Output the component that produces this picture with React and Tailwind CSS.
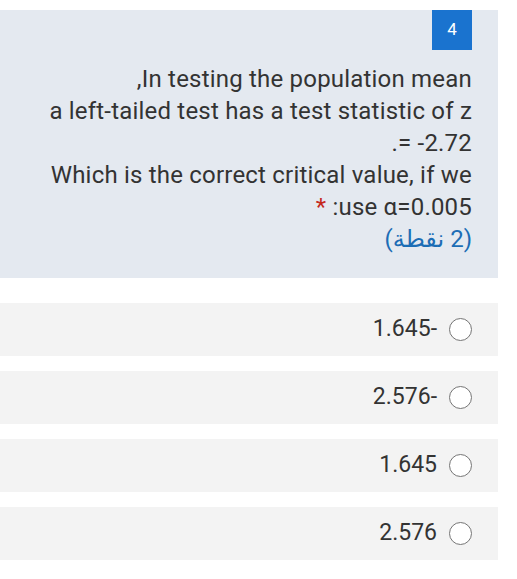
export default function App() {
  const options = ["1.645-", "2.576-", "1.645", "2.576"];

  return (
    <div className="w-[517px] h-[579px] bg-white pt-[10px] font-['Roboto','DejaVu_Sans',sans-serif]">
      {/* Question card */}
      <div className="w-[498px] bg-[#e4e9f0] pr-[26px] pb-[23px] flex flex-col items-end">
        <div className="w-[40px] h-[40px] bg-[#1a73cf] text-white text-[17px] flex items-center justify-center">
          4
        </div>
        <div className="mt-[13px] text-right text-[24px] tracking-[0.2px] leading-[32px] text-[#333]">
          <p>,In testing the population mean</p>
          <p>a left-tailed test has a test statistic of z</p>
          <p>.= -2.72</p>
          <p>Which is the correct critical value, if we</p>
          <p>
            <span className="text-[#c5281c]">*</span> :use α=0.005
          </p>
          <p className="text-[#1c6db5]">
            <span dir="rtl">(2 نقطة)</span>
          </p>
        </div>
      </div>

      {/* Options */}
      <div className="mt-[25px] flex flex-col gap-[15px]">
        {options.map((o) => (
          <div
            key={o}
            className="w-[498px] h-[53px] bg-[#f3f3f3] flex items-center justify-end pr-[26px] gap-[12px]"
          >
            <span className="text-[23px] text-[#333]">{o}</span>
            <span className="w-[23px] h-[23px] rounded-full border-[1.5px] border-[#757575] bg-white" />
          </div>
        ))}
      </div>
    </div>
  );
}
